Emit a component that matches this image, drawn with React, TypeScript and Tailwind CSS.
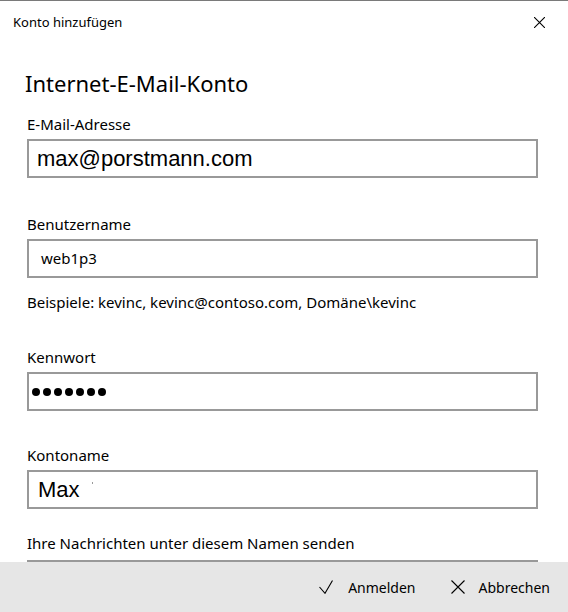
import { ReactNode } from 'react';

const ui = "font-['Noto_Sans','Open_Sans',sans-serif]";
const arial = "font-['Liberation_Sans',Arial,sans-serif]";

function Field({
  label,
  children,
  hint,
  className = '',
  boxClass = 'mt-[5px] h-[39px]',
}: {
  label: string;
  children?: ReactNode;
  hint?: string;
  className?: string;
  boxClass?: string;
}) {
  return (
    <div className={`flex flex-col ${className}`}>
      <label className="text-[15px] leading-[20px] text-black">{label}</label>
      <div className={`flex shrink-0 items-center border-2 border-[#999999] bg-white ${boxClass}`}>{children}</div>
      {hint ? <p className="mt-[14px] text-[15px] leading-[20px] text-black">{hint}</p> : null}
    </div>
  );
}

export default function App() {
  return (
    <div className={`flex h-[612px] w-[568px] flex-col overflow-hidden border-t border-[#7a7a7a] bg-white ${ui}`}>
      {/* Title bar */}
      <div className="flex h-[43px] shrink-0 items-center justify-between pl-[13px] pr-[23px]">
        <span className="text-[13px] text-black">Konto hinzufügen</span>
        <svg width="11" height="11" viewBox="0 0 11 11" className="text-black">
          <path d="M0 0 L11 11 M11 0 L0 11" stroke="currentColor" strokeWidth="1.1" />
        </svg>
      </div>

      {/* Scrolling form */}
      <div className="min-h-0 flex-1 overflow-hidden pl-[27px] pr-[30px]">
        <h1 className="-ml-[2px] mt-[24px] text-[22px] leading-[30px] text-black">Internet-E-Mail-Konto</h1>
        <Field label="E-Mail-Adresse" className="mt-[16px]">
          <span className={`pl-[8px] text-[22px] text-black ${arial}`}>max@porstmann.com</span>
        </Field>
        <Field
          label="Benutzername"
          hint="Beispiele: kevinc, kevinc@contoso.com, Domäne\kevinc"
          className="mt-[36px]"
        >
          <span className="pl-[12px] text-[15px] text-black">web1p3</span>
        </Field>
        <Field label="Kennwort" className="mt-[35px]">
          <div className="flex gap-[3px] pl-[3px]">
            {Array.from({ length: 7 }).map((_, i) => (
              <span key={i} className="h-[8px] w-[8px] rounded-full bg-black" />
            ))}
          </div>
        </Field>
        <Field label="Kontoname" className="mt-[34px]">
          <span className={`pl-[9px] text-[22px] text-black ${arial}`}>Max</span>
          <span className="mb-[14px] ml-[12px] h-[2px] w-[1px] bg-[#9a9a9a]" />
        </Field>
        <Field label="Ihre Nachrichten unter diesem Namen senden" className="mt-[24px]" boxClass="mt-[7px] h-[39px]" />
      </div>

      {/* Footer */}
      <div className="flex h-[50px] shrink-0 items-center justify-end gap-[35px] bg-[#e6e6e6] pr-[18px] text-[14px] text-black">
        <button className="flex items-center gap-[15px]">
          <svg width="14" height="14" viewBox="0 0 14 14">
            <path d="M0.5 7 L6 13.3 L13.5 0.5" fill="none" stroke="black" strokeWidth="1.1" />
          </svg>
          <span>Anmelden</span>
        </button>
        <button className="flex items-center gap-[14px]">
          <svg width="14" height="14" viewBox="0 0 14 14">
            <path d="M0.5 0.5 L13.5 13.5 M13.5 0.5 L0.5 13.5" fill="none" stroke="black" strokeWidth="1.1" />
          </svg>
          <span>Abbrechen</span>
        </button>
      </div>
    </div>
  );
}
